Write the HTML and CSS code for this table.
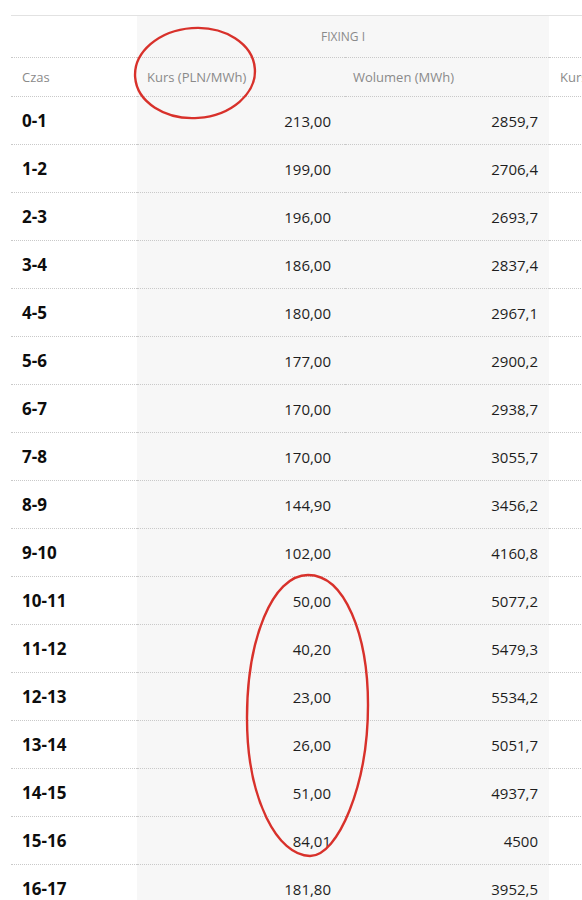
FILE: index.html
```html
<!DOCTYPE html>
<html lang="pl">
<head>
<meta charset="utf-8">
<title>Fixing I</title>
<link rel="stylesheet" href="styles.css">
</head>
<body>
<div class="page">
  <table class="rates">
    <colgroup>
      <col class="c-time">
      <col class="c-rate">
      <col class="c-vol">
      <col class="c-rate2">
      <col class="c-vol2">
    </colgroup>
    <thead>
      <tr class="group">
        <th></th>
        <th class="fx1" colspan="2">FIXING I</th>
        <th colspan="2">FIXING II</th>
      </tr>
      <tr class="cols">
        <th class="time-h">Czas</th>
        <th class="fx1 rate-h">Kurs (PLN/MWh)</th>
        <th class="fx1 vol-h">Wolumen (MWh)</th>
        <th class="rate2-h">Kurs (PLN/MWh)</th>
        <th class="vol2-h">Wolumen (MWh)</th>
      </tr>
    </thead>
    <tbody>
      <tr><td class="time">0-1</td><td class="fx1 rate">213,00</td><td class="fx1 vol">2859,7</td><td></td><td></td></tr>
      <tr><td class="time">1-2</td><td class="fx1 rate">199,00</td><td class="fx1 vol">2706,4</td><td></td><td></td></tr>
      <tr><td class="time">2-3</td><td class="fx1 rate">196,00</td><td class="fx1 vol">2693,7</td><td></td><td></td></tr>
      <tr><td class="time">3-4</td><td class="fx1 rate">186,00</td><td class="fx1 vol">2837,4</td><td></td><td></td></tr>
      <tr><td class="time">4-5</td><td class="fx1 rate">180,00</td><td class="fx1 vol">2967,1</td><td></td><td></td></tr>
      <tr><td class="time">5-6</td><td class="fx1 rate">177,00</td><td class="fx1 vol">2900,2</td><td></td><td></td></tr>
      <tr><td class="time">6-7</td><td class="fx1 rate">170,00</td><td class="fx1 vol">2938,7</td><td></td><td></td></tr>
      <tr><td class="time">7-8</td><td class="fx1 rate">170,00</td><td class="fx1 vol">3055,7</td><td></td><td></td></tr>
      <tr><td class="time">8-9</td><td class="fx1 rate">144,90</td><td class="fx1 vol">3456,2</td><td></td><td></td></tr>
      <tr><td class="time">9-10</td><td class="fx1 rate">102,00</td><td class="fx1 vol">4160,8</td><td></td><td></td></tr>
      <tr><td class="time">10-11</td><td class="fx1 rate">50,00</td><td class="fx1 vol">5077,2</td><td></td><td></td></tr>
      <tr><td class="time">11-12</td><td class="fx1 rate">40,20</td><td class="fx1 vol">5479,3</td><td></td><td></td></tr>
      <tr><td class="time">12-13</td><td class="fx1 rate">23,00</td><td class="fx1 vol">5534,2</td><td></td><td></td></tr>
      <tr><td class="time">13-14</td><td class="fx1 rate">26,00</td><td class="fx1 vol">5051,7</td><td></td><td></td></tr>
      <tr><td class="time">14-15</td><td class="fx1 rate">51,00</td><td class="fx1 vol">4937,7</td><td></td><td></td></tr>
      <tr><td class="time">15-16</td><td class="fx1 rate">84,01</td><td class="fx1 vol">4500</td><td></td><td></td></tr>
      <tr><td class="time">16-17</td><td class="fx1 rate">181,80</td><td class="fx1 vol">3952,5</td><td></td><td></td></tr>
    </tbody>
  </table>
  <svg class="marks" width="582" height="900" viewBox="0 0 582 900" aria-hidden="true">
    <ellipse cx="195" cy="73" rx="60" ry="45" transform="rotate(-4 195 73)"/>
    <path d="M308,575 C345,575 368,635 368,705 C368,785 338,856 310,856 C278,856 247,800 247,718 C247,640 272,575 308,575 Z"/>
  </svg>
</div>
</body>
</html>
```
FILE: styles.css
```css
html, body {
  margin: 0;
  padding: 0;
  background: #ffffff;
}

body {
  font-family: "Open Sans", "Noto Sans", sans-serif;
  color: #222222;
}

.page {
  position: relative;
  width: 582px;
  height: 900px;
  box-sizing: border-box;
  padding: 15px 0 0 11px;
  overflow: hidden;
}

.rates {
  border-collapse: collapse;
  table-layout: fixed;
  width: 960px;
}

.c-time { width: 126px; }
.c-rate { width: 208px; }
.c-vol { width: 204px; }
.c-rate2 { width: 210px; }
.c-vol2 { width: 212px; }

.fx1 {
  background: #f7f7f7;
}

.group th {
  height: 41px;
  padding: 0;
  border-top: 1px solid #e2e2e2;
  border-bottom: 1px dotted #c9c9c9;
  font-size: 12px;
  font-weight: 400;
  color: #8a8a8a;
  text-align: center;
}

.cols th {
  height: 38px;
  padding: 0;
  border-bottom: 1px dotted #c9c9c9;
  font-size: 13px;
  font-weight: 400;
  color: #8a8a8a;
  text-align: left;
}

.time-h { padding-left: 11px !important; }
.rate-h { padding-left: 10px !important; }
.vol-h { padding-left: 8px !important; }
.rate2-h { padding-left: 11px !important; }
.vol2-h { padding-left: 8px !important; }

tbody td {
  height: 47px;
  padding: 0 9px;
  border-bottom: 1px dotted #c9c9c9;
  font-size: 15px;
  color: #1e1e1e;
  text-align: right;
}

tbody td.rate { padding-right: 14px; }
tbody td.vol { padding-right: 11px; }

tbody td.time {
  padding-left: 11px;
  font-size: 17px;
  font-weight: 700;
  color: #0d0d0d;
  text-align: left;
}

.marks {
  position: absolute;
  left: 0;
  top: 0;
  pointer-events: none;
}

.marks ellipse,
.marks path {
  fill: none;
  stroke: #d8312b;
  stroke-width: 2.4;
}
```
